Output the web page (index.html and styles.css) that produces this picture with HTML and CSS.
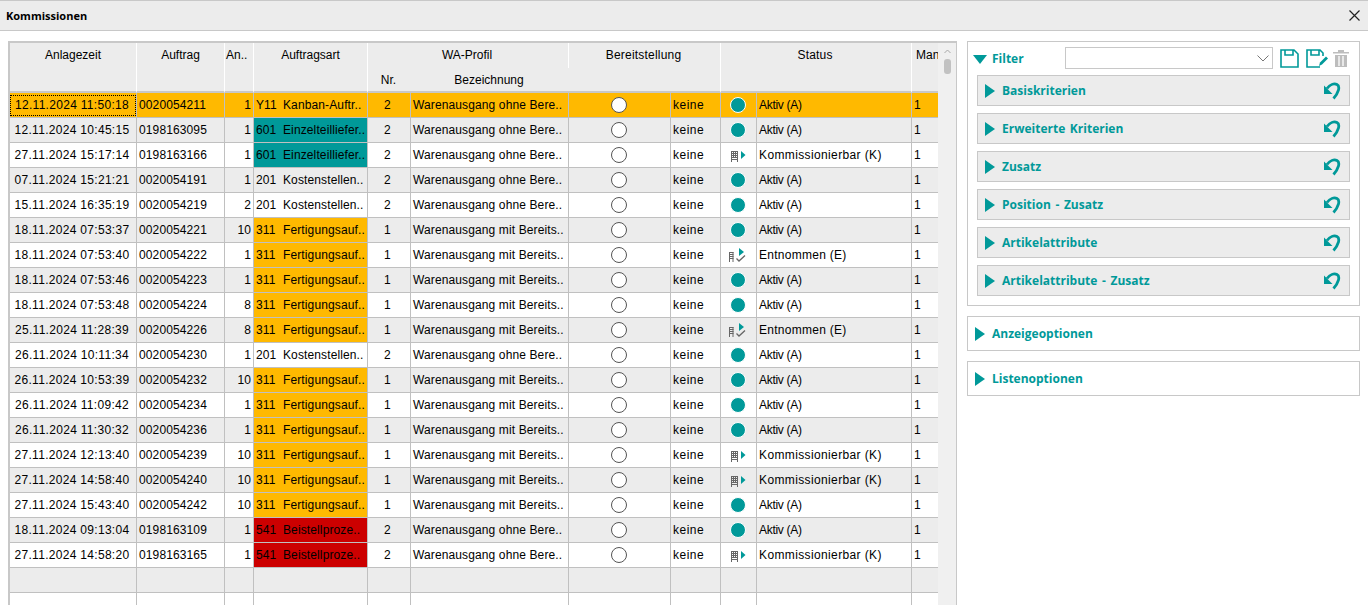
FILE: index.html
```html
<!DOCTYPE html>
<html lang="de">

<head>
    <meta charset="UTF-8">
    <title>Kommissionen</title>
    <link rel="stylesheet" href="styles.css">
</head>

<body>
    <svg class="defs" width="0" height="0">
        <symbol id="i-aktiv" viewBox="0 0 18 18"><circle cx="9" cy="9" r="7.5" fill="#009999" stroke="#fff" stroke-width="1"/></symbol>
        <symbol id="i-radio" viewBox="0 0 18 18"><circle cx="9" cy="9" r="7.5" fill="#fff" stroke="#555" stroke-width="1"/></symbol>
        <symbol id="i-komm" viewBox="0 0 18 16">
            <path d="M2 4.500h7M2 6.500h7M2 8.500h7M2 10.500h7M2.500 4v11M4.500 4v7M6.500 4v7M8.500 4v11M2 12.500h7" fill="none" stroke="#666" stroke-width="1"/>
            <path d="M12 4l4.500 4-4.500 4z" fill="#009999"/>
        </symbol>
        <symbol id="i-entn" viewBox="0 0 18 16">
            <path d="M0 5.500h4.500M0 7.500h4.500M0 9.500h4.500M0 11.500h4.500M0.500 5v10M4 5v10" fill="none" stroke="#666" stroke-width="1"/>
            <path d="M10 1l5 4-5 4z" fill="#009999"/>
            <path d="M7.500 11.500l2.500 2.500 6-5.500" fill="none" stroke="#666" stroke-width="1.300"/>
        </symbol>
        <symbol id="i-undo" viewBox="0 0 17 18">
            <path d="M0 3.500v8.500h8.500z" fill="#009999"/>
            <path d="M3 6.500c3-4 7-5.500 10-4 3.500 2 1.500 8.500-3.500 14" fill="none" stroke="#009999" stroke-width="2.800"/>
        </symbol>
    </svg>

    <div class="titlebar">
        <span class="titlebar-text">Kommissionen</span>
        <svg class="close-icon" width="11" height="11" viewBox="0 0 11 11"><path d="M0.500 0.500l10 10M10.500 0.500l-10 10" stroke="#222" stroke-width="1.200"/></svg>
    </div>

    <div class="main">
        <div class="list-panel">
            <table class="list">
                <colgroup>
                    <col class="c-zeit"><col class="c-auftrag"><col class="c-an"><col class="c-art"><col class="c-nr"><col class="c-bez">
                    <col class="c-radio"><col class="c-keine"><col class="c-icon"><col class="c-status"><col class="c-man">
                </colgroup>
                <thead>
                    <tr class="head-top">
                        <th rowspan="2">Anlagezeit</th>
                        <th rowspan="2">Auftrag</th>
                        <th rowspan="2" class="head-an">An..</th>
                        <th rowspan="2">Auftragsart</th>
                        <th colspan="2" class="head-wa">WA-Profil</th>
                        <th colspan="2" rowspan="2" class="head-wide">Bereitstellung</th>
                        <th colspan="2" rowspan="2" class="head-wide">Status</th>
                        <th rowspan="2" class="head-man">Man</th>
                    </tr>
                    <tr class="head-sub">
                        <th class="no-line">Nr.</th>
                        <th class="head-bez">Bezeichnung</th>
                    </tr>
                </thead>
                <tbody>
                    <tr class="selected"><td class="zeit"><span class="focus">12.11.2024 11:50:18</span></td><td>0020054211</td><td class="num">1</td><td><span class="code">Y11</span>Kanban-Auftr..</td><td class="nr">2</td><td>Warenausgang ohne Bere..</td><td class="mid"><svg class="ico"><use href="#i-radio"/></svg></td><td class="keine">keine</td><td class="mid"><svg class="ico"><use href="#i-aktiv"/></svg></td><td class="st-a">Aktiv (A)</td><td>1</td></tr>
                    <tr><td class="zeit">12.11.2024 10:45:15</td><td>0198163095</td><td class="num">1</td><td class="art-teal"><span class="code">601</span>Einzelteilliefer..</td><td class="nr">2</td><td>Warenausgang ohne Bere..</td><td class="mid"><svg class="ico"><use href="#i-radio"/></svg></td><td class="keine">keine</td><td class="mid"><svg class="ico"><use href="#i-aktiv"/></svg></td><td class="st-a">Aktiv (A)</td><td>1</td></tr>
                    <tr><td class="zeit">27.11.2024 15:17:14</td><td>0198163166</td><td class="num">1</td><td class="art-teal"><span class="code">601</span>Einzelteilliefer..</td><td class="nr">2</td><td>Warenausgang ohne Bere..</td><td class="mid"><svg class="ico"><use href="#i-radio"/></svg></td><td class="keine">keine</td><td class="mid"><svg class="ico-k"><use href="#i-komm"/></svg></td><td class="st-k">Kommissionierbar (K)</td><td>1</td></tr>
                    <tr><td class="zeit">07.11.2024 15:21:21</td><td>0020054191</td><td class="num">1</td><td><span class="code">201</span>Kostenstellen..</td><td class="nr">2</td><td>Warenausgang ohne Bere..</td><td class="mid"><svg class="ico"><use href="#i-radio"/></svg></td><td class="keine">keine</td><td class="mid"><svg class="ico"><use href="#i-aktiv"/></svg></td><td class="st-a">Aktiv (A)</td><td>1</td></tr>
                    <tr><td class="zeit">15.11.2024 16:35:19</td><td>0020054219</td><td class="num">2</td><td><span class="code">201</span>Kostenstellen..</td><td class="nr">2</td><td>Warenausgang ohne Bere..</td><td class="mid"><svg class="ico"><use href="#i-radio"/></svg></td><td class="keine">keine</td><td class="mid"><svg class="ico"><use href="#i-aktiv"/></svg></td><td class="st-a">Aktiv (A)</td><td>1</td></tr>
                    <tr><td class="zeit">18.11.2024 07:53:37</td><td>0020054221</td><td class="num">10</td><td class="art-orange"><span class="code">311</span>Fertigungsauf..</td><td class="nr">1</td><td>Warenausgang mit Bereits..</td><td class="mid"><svg class="ico"><use href="#i-radio"/></svg></td><td class="keine">keine</td><td class="mid"><svg class="ico"><use href="#i-aktiv"/></svg></td><td class="st-a">Aktiv (A)</td><td>1</td></tr>
                    <tr><td class="zeit">18.11.2024 07:53:40</td><td>0020054222</td><td class="num">1</td><td class="art-orange"><span class="code">311</span>Fertigungsauf..</td><td class="nr">1</td><td>Warenausgang mit Bereits..</td><td class="mid"><svg class="ico"><use href="#i-radio"/></svg></td><td class="keine">keine</td><td class="mid"><svg class="ico-k"><use href="#i-entn"/></svg></td><td class="st-e">Entnommen (E)</td><td>1</td></tr>
                    <tr><td class="zeit">18.11.2024 07:53:46</td><td>0020054223</td><td class="num">1</td><td class="art-orange"><span class="code">311</span>Fertigungsauf..</td><td class="nr">1</td><td>Warenausgang mit Bereits..</td><td class="mid"><svg class="ico"><use href="#i-radio"/></svg></td><td class="keine">keine</td><td class="mid"><svg class="ico"><use href="#i-aktiv"/></svg></td><td class="st-a">Aktiv (A)</td><td>1</td></tr>
                    <tr><td class="zeit">18.11.2024 07:53:48</td><td>0020054224</td><td class="num">8</td><td class="art-orange"><span class="code">311</span>Fertigungsauf..</td><td class="nr">1</td><td>Warenausgang mit Bereits..</td><td class="mid"><svg class="ico"><use href="#i-radio"/></svg></td><td class="keine">keine</td><td class="mid"><svg class="ico"><use href="#i-aktiv"/></svg></td><td class="st-a">Aktiv (A)</td><td>1</td></tr>
                    <tr><td class="zeit">25.11.2024 11:28:39</td><td>0020054226</td><td class="num">8</td><td class="art-orange"><span class="code">311</span>Fertigungsauf..</td><td class="nr">1</td><td>Warenausgang mit Bereits..</td><td class="mid"><svg class="ico"><use href="#i-radio"/></svg></td><td class="keine">keine</td><td class="mid"><svg class="ico-k"><use href="#i-entn"/></svg></td><td class="st-e">Entnommen (E)</td><td>1</td></tr>
                    <tr><td class="zeit">26.11.2024 10:11:34</td><td>0020054230</td><td class="num">1</td><td><span class="code">201</span>Kostenstellen..</td><td class="nr">2</td><td>Warenausgang ohne Bere..</td><td class="mid"><svg class="ico"><use href="#i-radio"/></svg></td><td class="keine">keine</td><td class="mid"><svg class="ico"><use href="#i-aktiv"/></svg></td><td class="st-a">Aktiv (A)</td><td>1</td></tr>
                    <tr><td class="zeit">26.11.2024 10:53:39</td><td>0020054232</td><td class="num">10</td><td class="art-orange"><span class="code">311</span>Fertigungsauf..</td><td class="nr">1</td><td>Warenausgang mit Bereits..</td><td class="mid"><svg class="ico"><use href="#i-radio"/></svg></td><td class="keine">keine</td><td class="mid"><svg class="ico"><use href="#i-aktiv"/></svg></td><td class="st-a">Aktiv (A)</td><td>1</td></tr>
                    <tr><td class="zeit">26.11.2024 11:09:42</td><td>0020054234</td><td class="num">1</td><td class="art-orange"><span class="code">311</span>Fertigungsauf..</td><td class="nr">1</td><td>Warenausgang mit Bereits..</td><td class="mid"><svg class="ico"><use href="#i-radio"/></svg></td><td class="keine">keine</td><td class="mid"><svg class="ico"><use href="#i-aktiv"/></svg></td><td class="st-a">Aktiv (A)</td><td>1</td></tr>
                    <tr><td class="zeit">26.11.2024 11:30:32</td><td>0020054236</td><td class="num">1</td><td class="art-orange"><span class="code">311</span>Fertigungsauf..</td><td class="nr">1</td><td>Warenausgang mit Bereits..</td><td class="mid"><svg class="ico"><use href="#i-radio"/></svg></td><td class="keine">keine</td><td class="mid"><svg class="ico"><use href="#i-aktiv"/></svg></td><td class="st-a">Aktiv (A)</td><td>1</td></tr>
                    <tr><td class="zeit">27.11.2024 12:13:40</td><td>0020054239</td><td class="num">10</td><td class="art-orange"><span class="code">311</span>Fertigungsauf..</td><td class="nr">1</td><td>Warenausgang mit Bereits..</td><td class="mid"><svg class="ico"><use href="#i-radio"/></svg></td><td class="keine">keine</td><td class="mid"><svg class="ico-k"><use href="#i-komm"/></svg></td><td class="st-k">Kommissionierbar (K)</td><td>1</td></tr>
                    <tr><td class="zeit">27.11.2024 14:58:40</td><td>0020054240</td><td class="num">10</td><td class="art-orange"><span class="code">311</span>Fertigungsauf..</td><td class="nr">1</td><td>Warenausgang mit Bereits..</td><td class="mid"><svg class="ico"><use href="#i-radio"/></svg></td><td class="keine">keine</td><td class="mid"><svg class="ico-k"><use href="#i-komm"/></svg></td><td class="st-k">Kommissionierbar (K)</td><td>1</td></tr>
                    <tr><td class="zeit">27.11.2024 15:43:40</td><td>0020054242</td><td class="num">10</td><td class="art-orange"><span class="code">311</span>Fertigungsauf..</td><td class="nr">1</td><td>Warenausgang mit Bereits..</td><td class="mid"><svg class="ico"><use href="#i-radio"/></svg></td><td class="keine">keine</td><td class="mid"><svg class="ico"><use href="#i-aktiv"/></svg></td><td class="st-a">Aktiv (A)</td><td>1</td></tr>
                    <tr><td class="zeit">18.11.2024 09:13:04</td><td>0198163109</td><td class="num">1</td><td class="art-red"><span class="code">541</span>Beistellproze..</td><td class="nr">2</td><td>Warenausgang ohne Bere..</td><td class="mid"><svg class="ico"><use href="#i-radio"/></svg></td><td class="keine">keine</td><td class="mid"><svg class="ico"><use href="#i-aktiv"/></svg></td><td class="st-a">Aktiv (A)</td><td>1</td></tr>
                    <tr><td class="zeit">27.11.2024 14:58:20</td><td>0198163165</td><td class="num">1</td><td class="art-red"><span class="code">541</span>Beistellproze..</td><td class="nr">2</td><td>Warenausgang ohne Bere..</td><td class="mid"><svg class="ico"><use href="#i-radio"/></svg></td><td class="keine">keine</td><td class="mid"><svg class="ico-k"><use href="#i-komm"/></svg></td><td class="st-k">Kommissionierbar (K)</td><td>1</td></tr>
                    <tr><td></td><td></td><td></td><td></td><td></td><td></td><td></td><td></td><td></td><td></td><td></td></tr>
                    <tr><td></td><td></td><td></td><td></td><td></td><td></td><td></td><td></td><td></td><td></td><td></td></tr>
                </tbody>
            </table>
            <div class="scrollbar">
                <svg class="scroll-up" width="7" height="5" viewBox="0 0 7 5"><path d="M0.500 4l3-3 3 3" fill="none" stroke="#a8a8a8" stroke-width="1"/></svg>
                <div class="scroll-thumb"></div>
            </div>
        </div>

        <div class="side">
            <div class="box filter-box">
                <div class="filter-head">
                    <span class="arrow-down"></span>
                    <span class="filter-label">Filter</span>
                    <div class="filter-select">
                        <svg width="12" height="7" viewBox="0 0 12 7"><path d="M0.500 0.500l5.500 5.500 5.500-5.500" fill="none" stroke="#777" stroke-width="1"/></svg>
                    </div>
                    <svg class="tool-icon" width="19" height="19" viewBox="0 0 19 19">
                        <path d="M1 1h13l4 4v13h-17z M5 1v5h8v-5" fill="none" stroke="#009999" stroke-width="1.600"/>
                    </svg>
                    <svg class="tool-icon" width="22" height="19" viewBox="0 0 22 19">
                        <path d="M14 18h-13v-17h13l3 3v3 M5 1v5h8v-5" fill="none" stroke="#009999" stroke-width="1.600"/>
                        <path d="M13 17l1-3.500 6-6 2 2-6 6z" fill="#009999"/>
                    </svg>
                    <svg class="tool-icon trash" width="16" height="18" viewBox="0 0 16 18">
                        <path d="M0 3h16v1.500h-16z M5 1h6v2h-6z" fill="#bdbdbd"/>
                        <path d="M2 6h12v12h-12z" fill="#bdbdbd"/>
                        <path d="M6 7v10M10 7v10" stroke="#fff" stroke-width="1.300"/>
                    </svg>
                </div>
                <div class="section"><span class="arrow-right"></span><span class="section-label">Basiskriterien</span><svg class="undo"><use href="#i-undo"/></svg></div>
                <div class="section"><span class="arrow-right"></span><span class="section-label">Erweiterte Kriterien</span><svg class="undo"><use href="#i-undo"/></svg></div>
                <div class="section"><span class="arrow-right"></span><span class="section-label">Zusatz</span><svg class="undo"><use href="#i-undo"/></svg></div>
                <div class="section"><span class="arrow-right"></span><span class="section-label">Position - Zusatz</span><svg class="undo"><use href="#i-undo"/></svg></div>
                <div class="section"><span class="arrow-right"></span><span class="section-label">Artikelattribute</span><svg class="undo"><use href="#i-undo"/></svg></div>
                <div class="section"><span class="arrow-right"></span><span class="section-label">Artikelattribute - Zusatz</span><svg class="undo"><use href="#i-undo"/></svg></div>
            </div>
            <div class="box option-box"><span class="arrow-right"></span><span class="section-label">Anzeigeoptionen</span></div>
            <div class="box option-box"><span class="arrow-right"></span><span class="section-label">Listenoptionen</span></div>
        </div>
    </div>
</body>

</html>
```

FILE: styles.css
```css
html,
body {
    height: 100%;
}

body {
    margin: 0;
    overflow: hidden;
    background: #fff;
    color: #000;
    font-family: "Liberation Sans", Arial, sans-serif;
    font-size: 12px;
}

.defs {
    display: block;
    height: 0;
}

.titlebar {
    display: flex;
    align-items: center;
    justify-content: space-between;
    box-sizing: border-box;
    height: 31px;
    padding: 0 8px 0 6px;
    background: #ececec;
    border-top: 1px solid #c8c8c8;
    border-bottom: 1px solid #c8c8c8;
}

.titlebar-text {
    font-family: "Open Sans", sans-serif;
    font-size: 11px;
    font-weight: 700;
}

.main {
    display: flex;
    align-items: flex-start;
    gap: 10px;
    box-sizing: border-box;
    height: 574px;
    padding: 10px 8px 0;
    overflow: hidden;
}

/* Liste */
.list-panel {
    display: flex;
    flex: none;
    width: 949px;
    height: 564px;
    box-sizing: border-box;
    border: 1px solid #c8c8c8;
    border-width: 2px 1px 0 2px;
    overflow: hidden;
}

.list {
    flex: none;
    align-self: flex-start;
    width: 928px;
    border-collapse: separate;
    border-spacing: 0;
    table-layout: fixed;
}

.c-zeit { width: 127px; }
.c-auftrag { width: 88px; }
.c-an { width: 29px; }
.c-art { width: 114px; }
.c-nr { width: 43px; }
.c-bez { width: 158px; }
.c-radio { width: 102px; }
.c-keine { width: 50px; }
.c-icon { width: 36px; }
.c-status { width: 155px; }
.c-man { width: 26px; }

.list th {
    padding: 5px 0 0;
    background: #ececec;
    border-right: 1px solid #fff;
    border-bottom: 2px solid #c8c8c8;
    font-weight: 400;
    line-height: 14px;
    text-align: center;
    vertical-align: top;
    white-space: nowrap;
    overflow: hidden;
}

.list th:last-child {
    border-right: none;
}

.head-top {
    height: 25px;
}

.list .head-wa {
    padding-right: 2px;
    border-bottom: none;
}

.list .head-wide {
    padding-right: 2px;
    letter-spacing: 0.2px;
}

.head-sub {
    height: 25px;
}

.head-sub th {
    padding-top: 5px;
}

.list .no-line {
    padding-right: 2px;
    border-right: none;
}

.list .head-bez {
    padding-right: 2px;
}

.list .head-an {
    padding-left: 1px;
    text-align: left;
}

.list .head-man {
    padding-left: 4px;
    text-align: left;
}

.list td {
    box-sizing: border-box;
    height: 25px;
    padding: 0 2px;
    border-right: 1px solid #c0c0c0;
    border-bottom: 1px solid #c0c0c0;
    white-space: nowrap;
    overflow: hidden;
    letter-spacing: 0.12px;
}

.list td:last-child {
    border-right: none;
}

.list tbody tr:nth-child(even) td {
    background: #ececec;
}

.list tbody tr.selected td {
    background: #ffb900;
}

.list td.zeit {
    padding: 0 3px 0 1px;
    letter-spacing: 0.3px;
    text-align: center;
}

.list td.num {
    text-align: right;
}

.list td.nr {
    padding: 0 3px 0 0;
    text-align: center;
}

.list td.mid {
    padding: 0 1px 0 0;
    text-align: center;
}

.list td.keine {
    letter-spacing: 0.5px;
}

.list td.st-a {
    letter-spacing: -0.3px;
}

.list td.st-k {
    letter-spacing: 0.37px;
}

.list td.st-e {
    letter-spacing: 0.27px;
}

.list tbody tr td.art-teal {
    background: #009999;
}

.list tbody tr td.art-orange {
    background: #ffb900;
}

.list tbody tr td.art-red {
    background: #cc0000;
}

.code {
    display: inline-block;
    width: 27px;
}

.focus {
    display: block;
    margin: 1px -3px 0 -1px;
    padding: 3px 2px 4px 0;
    outline: 1px dotted #000;
    outline-offset: -1px;
}

.ico {
    display: block;
    width: 18px;
    height: 18px;
    margin: 0 auto;
}

.ico-k {
    display: block;
    width: 18px;
    height: 16px;
    margin: 0 0 0 8px;
}

/* Rollbalken */
.scrollbar {
    flex: none;
    width: 18px;
    background: #f0f0f0;
    padding-top: 6px;
    box-sizing: border-box;
}

.scroll-up {
    display: block;
    margin: 0 auto 5px;
}

.scroll-thumb {
    width: 7px;
    height: 15px;
    margin: 0 auto;
    background: #c2c2c2;
    border-radius: 3px;
}

/* Filterbereich */
.side {
    display: flex;
    flex-direction: column;
    flex: none;
    gap: 10px;
    width: 393px;
}

.box {
    box-sizing: border-box;
    background: #fff;
    border: 1px solid #c8c8c8;
}

.filter-box {
    display: flex;
    flex-direction: column;
    gap: 7px;
    height: 265px;
    padding: 5px 9px 0;
}

.filter-head {
    display: flex;
    align-items: center;
    height: 22px;
    margin: 0 0 -1px -4px;
}

.arrow-down {
    flex: none;
    width: 0;
    height: 0;
    border-left: 7px solid transparent;
    border-right: 7px solid transparent;
    border-top: 9px solid #009999;
    margin-top: 2px;
}

.filter-label {
    flex: none;
    width: 73px;
    margin-left: 5px;
    color: #009999;
    font-family: "Open Sans", sans-serif;
    font-size: 12px;
    font-weight: 700;
}

.filter-select {
    display: flex;
    flex: none;
    align-items: center;
    justify-content: flex-end;
    box-sizing: border-box;
    width: 208px;
    height: 22px;
    padding-right: 3px;
    border: 1px solid #c8c8c8;
}

.tool-icon {
    flex: none;
    margin-left: 7px;
}

.tool-icon.trash {
    margin-left: 5px;
}

.section {
    display: flex;
    flex: none;
    align-items: center;
    box-sizing: border-box;
    width: 373px;
    height: 31px;
    padding: 0 8px 0 7px;
    background: #ececec;
    border: 1px solid #c8c8c8;
}

.arrow-right {
    flex: none;
    width: 0;
    height: 0;
    border-top: 7px solid transparent;
    border-bottom: 7px solid transparent;
    border-left: 10px solid #009999;
}

.section-label {
    margin-left: 7px;
    color: #009999;
    font-family: "Open Sans", sans-serif;
    font-size: 12px;
    font-weight: 700;
    word-spacing: 1.5px;
}

.undo {
    width: 17px;
    height: 18px;
    margin-left: auto;
}

.option-box {
    display: flex;
    align-items: center;
    height: 35px;
    padding-left: 7px;
}
```
